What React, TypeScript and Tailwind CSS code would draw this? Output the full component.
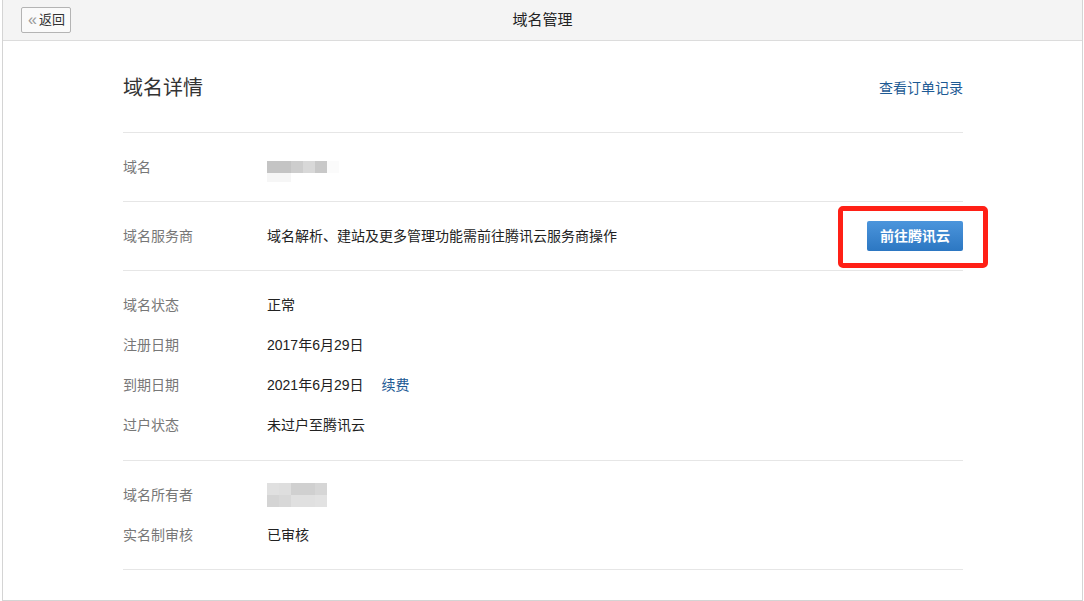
import React from 'react';

const font = { fontFamily: '"Liberation Sans", "Noto Sans CJK SC", sans-serif' };

const Row: React.FC<{ label: string; children: React.ReactNode }> = ({ label, children }) => (
  <div className="flex h-10 items-center">
    <div className="w-[144px] shrink-0 text-[14px] text-[#777]">{label}</div>
    <div className="flex items-center text-[14px] text-[#222]">{children}</div>
  </div>
);

const Blur: React.FC<{ cells: string[][] }> = ({ cells }) => (
  <div className="flex flex-col">
    {cells.map((r, i) => (
      <div key={i} className="flex">
        {r.map((c, j) => (
          <div key={j} className="h-[12px] w-[12px]" style={{ background: c }} />
        ))}
      </div>
    ))}
  </div>
);

export default function App() {
  return (
    <div className="h-[601px] w-[1084px] bg-white" style={font}>
      <div className="ml-[2px] h-[601px] w-[1081px] border-b border-l border-r border-[#d4d4d4] bg-white">
        {/* header */}
        <div className="relative flex h-[41px] items-center justify-center border-b border-[#dcdcdc] bg-[#f4f4f4]">
          <button className="absolute left-[18px] top-[7px] flex h-[26px] w-[50px] items-center gap-[2px] rounded-[2px] border border-[#b4b4b4] bg-[#fafafa] pl-[6px] text-[13px] text-[#333]">
            <span className="text-[16px] font-light leading-none text-[#999]">«</span>
            <span>返回</span>
          </button>
          <div className="text-[15px] text-[#222]">域名管理</div>
        </div>

        {/* body */}
        <div className="w-[840px]" style={{ marginLeft: 120 }}>
          <div className="flex h-[92px] items-center justify-between border-b border-[#e6e6e6] pt-[3px]">
            <div className="text-[20px] text-[#333]">域名详情</div>
            <a className="text-[14px] text-[#1d5a94]">查看订单记录</a>
          </div>

          <div className="flex h-[69px] items-center border-b border-[#e6e6e6]">
            <div className="w-[144px] shrink-0 text-[14px] text-[#777]">域名</div>
            <div className="pt-[8px]">
              <div className="flex">
                {['#c4c4c4', '#c4c4c4', '#cdcdcd', '#d8d8d8', '#c8c8c8'].map((c, i) => (
                  <div key={i} className="h-[12px] w-[12px]" style={{ background: c }} />
                ))}
                <div className="h-[12px] w-[12px] bg-[#fbfbfb]" />
              </div>
              <div className="flex">
                <div className="h-[9px] w-[24px] bg-[#f6f6f6]" />
              </div>
            </div>
          </div>

          <div className="relative flex h-[69px] items-center border-b border-[#e6e6e6]">
            <div className="w-[144px] shrink-0 text-[14px] text-[#777]">域名服务商</div>
            <div className="text-[14px] text-[#222]">域名解析、建站及更多管理功能需前往腾讯云服务商操作</div>
            <button className="ml-auto h-[30px] w-[96px] rounded-[2px] bg-gradient-to-b from-[#4b95dc] to-[#2c77c2] text-[14px] font-semibold text-white">
              前往腾讯云
            </button>
            <div className="absolute left-[715px] top-[4px] h-[62px] w-[150px] rounded-[5px] border-[5px] border-[#ff2016]" />
          </div>

          <div className="border-b border-[#e6e6e6] pb-[15px] pt-[14px]">
            <Row label="域名状态">正常</Row>
            <Row label="注册日期">2017年6月29日</Row>
            <Row label="到期日期">
              2021年6月29日<a className="ml-[18px] text-[#1d5a94]">续费</a>
            </Row>
            <Row label="过户状态">未过户至腾讯云</Row>
          </div>

          <div className="border-b border-[#e6e6e6] py-[14px]">
            <Row label="域名所有者">
              <Blur
                cells={[
                  ['#e0e0e0', '#dedede', '#d0d0d0', '#d0d0d0', '#d6d6d6'],
                  ['#d4d4d4', '#d8d8d8', '#e0e0e0', '#e0e0e0', '#e2e2e2'],
                ]}
              />
            </Row>
            <Row label="实名制审核">已审核</Row>
          </div>
        </div>
      </div>
    </div>
  );
}
